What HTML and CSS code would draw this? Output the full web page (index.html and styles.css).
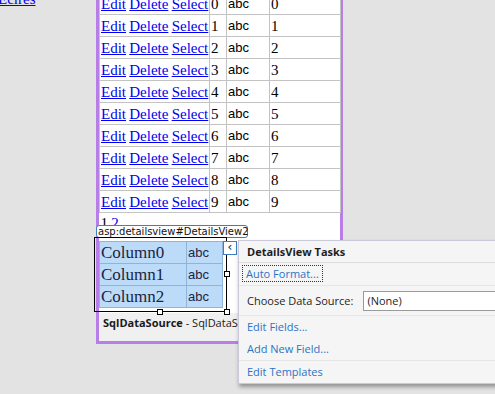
FILE: index.html
```html
<!DOCTYPE html>
<html lang="en">
<head>
    <meta charset="UTF-8">
    <title>DetailsView designer</title>
    <link rel="stylesheet" href="styles.css">
</head>
<body>
    <div class="page">
        <div class="side">
            <a href="#" class="side-link">Ecires</a>
        </div>
        <div class="surface">
            <table class="grid">
                <colgroup>
                    <col class="c-links"><col class="c-id"><col class="c-name"><col class="c-num">
                </colgroup>
                <tr><td><a href="#">Edit</a> <a href="#">Delete</a> <a href="#">Select</a></td><td>0</td><td class="abc">abc</td><td>0</td></tr>
                <tr><td><a href="#">Edit</a> <a href="#">Delete</a> <a href="#">Select</a></td><td>1</td><td class="abc">abc</td><td>1</td></tr>
                <tr><td><a href="#">Edit</a> <a href="#">Delete</a> <a href="#">Select</a></td><td>2</td><td class="abc">abc</td><td>2</td></tr>
                <tr><td><a href="#">Edit</a> <a href="#">Delete</a> <a href="#">Select</a></td><td>3</td><td class="abc">abc</td><td>3</td></tr>
                <tr><td><a href="#">Edit</a> <a href="#">Delete</a> <a href="#">Select</a></td><td>4</td><td class="abc">abc</td><td>4</td></tr>
                <tr><td><a href="#">Edit</a> <a href="#">Delete</a> <a href="#">Select</a></td><td>5</td><td class="abc">abc</td><td>5</td></tr>
                <tr><td><a href="#">Edit</a> <a href="#">Delete</a> <a href="#">Select</a></td><td>6</td><td class="abc">abc</td><td>6</td></tr>
                <tr><td><a href="#">Edit</a> <a href="#">Delete</a> <a href="#">Select</a></td><td>7</td><td class="abc">abc</td><td>7</td></tr>
                <tr><td><a href="#">Edit</a> <a href="#">Delete</a> <a href="#">Select</a></td><td>8</td><td class="abc">abc</td><td>8</td></tr>
                <tr><td><a href="#">Edit</a> <a href="#">Delete</a> <a href="#">Select</a></td><td>9</td><td class="abc">abc</td><td>9</td></tr>
                <tr class="pager"><td colspan="4"><span class="pg">1</span> <a href="#">2</a></td></tr>
            </table>

            <div class="details-area">
                <table class="details">
                    <tr><td>Column0</td><td class="abc">abc</td></tr>
                    <tr><td>Column1</td><td class="abc">abc</td></tr>
                    <tr><td>Column2</td><td class="abc">abc</td></tr>
                </table>
            </div>

            <div class="ds-bar"><b>SqlDataSource</b> - SqlDataSource1</div>
        </div>
    </div>

    <!-- designer adorners -->
    <div class="tag-label">asp:detailsview#DetailsView2</div>
    <div class="sel-frame">
        <span class="handle h-bottom"></span>
        <span class="handle h-corner"></span>
        <span class="handle h-right"></span>
    </div>
    <div class="smart-tag">&lsaquo;</div>

    <div class="tasks">
        <div class="tasks-head">DetailsView Tasks</div>
        <div class="tasks-row format-row"><a href="#" class="task-link focused">Auto Format...</a></div>
        <div class="tasks-row source-row">
            <span class="label">Choose Data Source:</span>
            <div class="dropdown">(None)</div>
        </div>
        <div class="tasks-row links">
            <a href="#" class="task-link">Edit Fields...</a>
            <a href="#" class="task-link">Add New Field...</a>
        </div>
        <div class="tasks-row last-row"><a href="#" class="task-link">Edit Templates</a></div>
    </div>
</body>
</html>
```

FILE: styles.css
```css
body {
    margin: 0;
    background-color: #e3e3e3;
    font-family: "Liberation Serif", serif;
    overflow: hidden;
    height: 394px;
}
.page {
    display: flex;
    align-items: flex-start;
}
.side {
    width: 96px;
}
.side-link {
    display: block;
    margin-top: -9px;
    margin-left: -2px;
    font-size: 15px;
    color: #0000ee;
}
.surface {
    width: 241px;
    margin-top: -11px;
    background-color: #ffffff;
    border: 3px solid #b87ee8;
}
a {
    color: #0000ee;
}

/* grid view */
.grid {
    border-collapse: collapse;
    table-layout: fixed;
    width: 241px;
    font-size: 15px;
}
.c-links { width: 110px; }
.c-id { width: 17px; }
.c-name { width: 43px; }
.c-num { width: 71px; }
.grid td {
    border: 1px solid #c3c3c3;
    height: 21px;
    padding: 0 1px;
    white-space: nowrap;
    line-height: 20px;
}
.grid td:first-child {
    word-spacing: -0.5px;
}
.grid .abc, .details .abc {
    font-family: "Liberation Sans", sans-serif;
    font-size: 13px;
}
.grid .pager td {
    height: 23px;
    border-left: none;
    border-right: none;
    border-bottom: none;
    vertical-align: top;
}

/* details view */
.details-area {
    padding: 5px 0 5px 0;
}
.details {
    border-collapse: collapse;
    width: 124px;
    background-color: #bcdbf9;
    color: #1c2440;
    font-size: 17px;
}
.details td {
    border: 1px solid #8fb4dc;
    height: 21px;
    padding: 0 1px;
    line-height: 20px;
}
.details td:first-child {
    width: 84px;
}
.ds-bar {
    background-color: #f0f0f0;
    height: 28px;
    padding-left: 4px;
    font-family: "Open Sans", sans-serif;
    font-size: 11px;
    line-height: 20px;
    color: #1a1a1a;
    white-space: nowrap;
    overflow: hidden;
}

/* adorners */
.tag-label {
    position: absolute;
    left: 96px;
    top: 225px;
    width: 149px;
    height: 11px;
    border: 1px solid #3f7ec2;
    border-radius: 3px;
    background-color: #ffffff;
    font-family: "DejaVu Sans", sans-serif;
    font-size: 10px;
    line-height: 11px;
    padding-left: 1px;
    color: #111111;
    white-space: nowrap;
}
.sel-frame {
    position: absolute;
    left: 94px;
    top: 237px;
    width: 131px;
    height: 73px;
    border: 1px solid #000000;
}
.handle {
    position: absolute;
    width: 4px;
    height: 4px;
    background-color: #ffffff;
    border: 1px solid #000000;
}
.h-bottom { left: 62px; bottom: -4px; }
.h-corner { right: -4px; bottom: -4px; }
.h-right { right: -4px; top: 33px; }
.smart-tag {
    position: absolute;
    left: 223px;
    top: 241px;
    width: 12px;
    height: 12px;
    border: 1px solid #3f7ec2;
    background-color: #ffffff;
    font-family: "DejaVu Sans", sans-serif;
    font-size: 12px;
    line-height: 10px;
    text-align: center;
    color: #222222;
}

/* tasks panel */
.tasks {
    position: absolute;
    left: 238px;
    top: 240px;
    width: 280px;
    height: 142px;
    background-color: #f5f5f5;
    border: 1px solid #c9c9d9;
    box-shadow: 1px 3px 4px rgba(0, 0, 0, 0.35);
    font-family: "Open Sans", sans-serif;
    font-size: 11px;
    color: #1e1e1e;
}
.tasks-head {
    height: 21px;
    padding-left: 8px;
    line-height: 22px;
    font-weight: bold;
    border-bottom: 1px solid #dcdcdc;
}
.tasks-row {
    padding-left: 8px;
    border-bottom: 1px solid #e6e6e6;
}
.format-row {
    height: 22px;
}
.last-row {
    border-bottom: none;
    height: 22px;
}
.task-link {
    color: #2b73c8;
    text-decoration: none;
    display: block;
    line-height: 22px;
}
.focused {
    display: inline-block;
    outline: 1px dotted #333333;
    margin: 3px 0 0 -4px;
    padding: 0 3px;
    line-height: 15px;
}
.source-row {
    height: 29px;
    display: flex;
    align-items: center;
    gap: 10px;
}
.dropdown {
    flex: 1;
    height: 18px;
    border: 1px solid #9a9a9a;
    background-color: #ffffff;
    padding-left: 3px;
    line-height: 18px;
}
```
